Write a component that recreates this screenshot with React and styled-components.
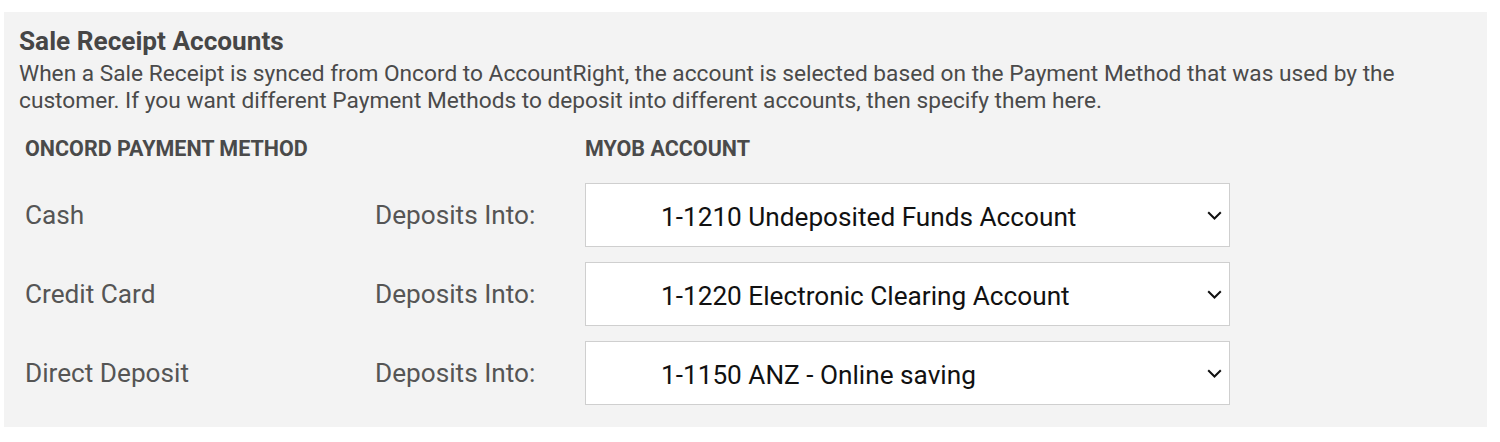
import styled, { createGlobalStyle } from "styled-components";

const GlobalStyle = createGlobalStyle`
    body {
        margin: 0;
        background: #fff;
        font-family: Roboto, "Liberation Sans", sans-serif;
    }
`;

const accounts = [
    { method: "Cash", account: "1-1210 Undeposited Funds Account" },
    { method: "Credit Card", account: "1-1220 Electronic Clearing Account" },
    { method: "Direct Deposit", account: "1-1150 ANZ - Online saving" },
];

const App = () => {
    return (
        <>
            <GlobalStyle />
            <Panel>
                <Title>Sale Receipt Accounts</Title>
                <Description>
                    When a Sale Receipt is synced from Oncord to AccountRight, the account is selected based on the Payment Method that was used by the
                    <br />
                    customer. If you want different Payment Methods to deposit into different accounts, then specify them here.
                </Description>
                <Table>
                    <HeaderCell>Oncord Payment Method</HeaderCell>
                    <HeaderCell />
                    <HeaderCell>MYOB Account</HeaderCell>
                    {accounts.map(x => (
                        <Row key={x.method}>
                            <Label>{x.method}</Label>
                            <Label>Deposits Into:</Label>
                            <SelectBox>
                                <SelectText>{x.account}</SelectText>
                                <Chevron viewBox="0 0 15 9">
                                    <path d="M1.2 1.2 L7.5 7.5 L13.8 1.2" />
                                </Chevron>
                            </SelectBox>
                        </Row>
                    ))}
                </Table>
            </Panel>
        </>
    );
};

const Panel = styled.div`
    margin: 12px 13px 0 4px;
    background: #f3f3f3;
    padding: 14px 15px 22px 15px;
    color: #4a4a4a;
`;

const Title = styled.h2`
    margin: 0;
    font-size: 26.2px;
    font-weight: 700;
    line-height: 30px;
    color: #464646;
`;

const Description = styled.p`
    margin: 4px 0 0 0;
    font-size: 22.7px;
    line-height: 27px;
    color: #4a4a4a;
    white-space: nowrap;
`;

const Table = styled.div`
    display: grid;
    grid-template-columns: 350px 210px 645px;
    row-gap: 15px;
    margin-top: 21px;
    padding-left: 6px;
`;

const HeaderCell = styled.div`
    font-size: 21.5px;
    font-weight: 700;
    text-transform: uppercase;
    line-height: 28px;
    color: #4a4a4a;
    margin-bottom: 5px;
`;

const Row = styled.div`
    display: contents;
`;

const Label = styled.div`
    display: flex;
    align-items: center;
    font-size: 26.2px;
    color: #555;
`;

const SelectBox = styled.div`
    height: 64px;
    box-sizing: border-box;
    background: #fff;
    border: 1px solid #cfcfcf;
    display: flex;
    align-items: center;
    padding-left: 75px;
    padding-right: 7px;
`;

const SelectText = styled.span`
    flex: 1;
    font-size: 26.2px;
    color: #111;
    margin-top: 3px;
`;

const Chevron = styled.svg`
    width: 15px;
    height: 9px;
    margin-top: 1px;
    fill: none;
    stroke: #111;
    stroke-width: 2;
`;

export default App;
